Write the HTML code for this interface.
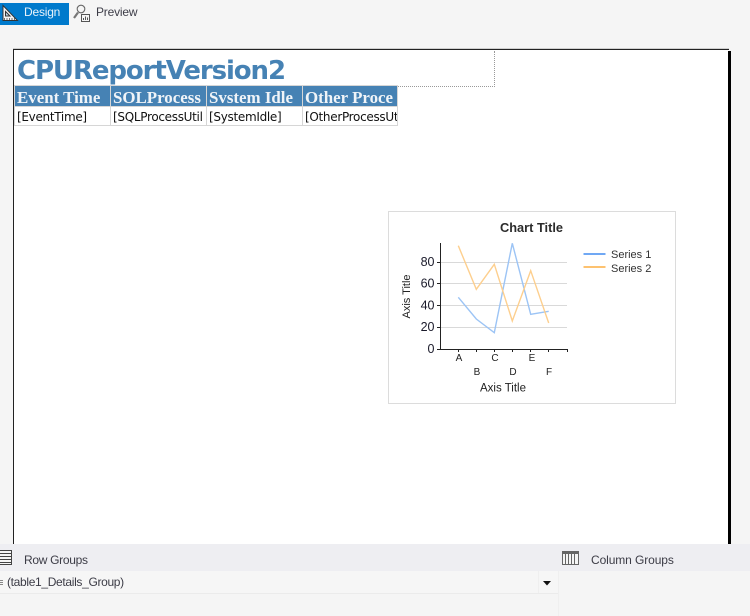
<!DOCTYPE html>
<html>
<head>
<meta charset="utf-8">
<style>
html,body{margin:0;padding:0;background:#f5f5f5;}
body{width:750px;height:616px;position:relative;overflow:hidden;font-family:"DejaVu Sans","Liberation Sans",sans-serif;}
.a{position:absolute;white-space:nowrap;}
.ui{font-family:"Liberation Sans",sans-serif;font-size:12px;color:#3c3c46;letter-spacing:-.2px;}
.th{position:absolute;top:86px;height:20px;background:#4682b4;color:#f0f4f8;font:bold 16.9px/23px "Liberation Serif",serif;padding-left:2px;overflow:hidden;white-space:nowrap;box-sizing:border-box;}
.td{position:absolute;top:107px;height:18px;background:#fff;color:#111;font:12px/21px "DejaVu Sans",sans-serif;padding-left:2px;overflow:hidden;white-space:nowrap;box-sizing:border-box;letter-spacing:-.3px;}
</style>
</head>
<body>
<!-- tabs -->
<div class="a" style="left:0;top:3px;width:69px;height:22px;background:#007acc;"></div>
<svg class="a" style="left:0;top:3px" width="20" height="20" viewBox="0 0 20 20">
<path d="M3 2.5V17.5H17.5L3 2.5Z" fill="#f4f4f4" stroke="#333" stroke-width="1"/>
<path d="M5.5 8.5V13H10Z" fill="#bcd7ec" stroke="#333" stroke-width="1"/>
<path d="M4 16H16" stroke="#444" stroke-width="1.6" stroke-dasharray="1 1.5"/>
</svg>
<div class="a ui" style="left:24px;top:5px;font-size:12px;line-height:15px;color:#e8f2fa;">Design</div>
<svg class="a" style="left:72px;top:3px" width="19" height="20" viewBox="0 0 19 20">
<circle cx="9" cy="6" r="3.8" fill="#f5f5f5" stroke="#666" stroke-width="1.1"/>
<path d="M6 9.5L2 15" stroke="#777" stroke-width="2.2"/>
<path d="M9.5 11.5H17.5V18.5H9.5Z" fill="#f5f5f5" stroke="#555"/>
<path d="M11.5 17V15M13.5 17V13.5M15.5 17V14.5" stroke="#555"/>
</svg>
<div class="a ui" style="left:96px;top:5px;line-height:15px;color:#3d3d48;">Preview</div>

<!-- report surface -->
<div class="a" style="left:13px;top:48px;width:716px;height:1px;background:#cfcfcf;"></div>
<div class="a" style="left:13px;top:49px;width:716px;height:495px;background:#fff;border-top:1px solid #222;border-left:1px solid #222;box-sizing:border-box;"></div>
<div class="a" style="left:728px;top:51px;width:3px;height:493px;background:#000;"></div>

<!-- title box -->
<div class="a" style="left:15px;top:51px;width:480px;height:36px;border-right:1px dotted #999;border-bottom:1px dotted #999;box-sizing:border-box;"></div>
<div class="a" style="left:17px;top:55px;font:bold 26px/33px 'DejaVu Sans',sans-serif;color:#4682b4;letter-spacing:-1.1px;">CPUReportVersion2</div>

<!-- table -->
<div class="a" style="left:14px;top:85px;width:384px;height:41px;background:#d6d6d6;"></div>
<div class="th" style="left:15px;width:95px;">Event Time</div>
<div class="th" style="left:111px;width:95px;">SOLProcess</div>
<div class="th" style="left:207px;width:95px;">Svstem Idle</div>
<div class="th" style="left:303px;width:94px;">Other Proce</div>
<div class="td" style="left:15px;width:95px;">[EventTime]</div>
<div class="td" style="left:111px;width:95px;">[SQLProcessUtil</div>
<div class="td" style="left:207px;width:95px;">[SystemIdle]</div>
<div class="td" style="left:303px;width:94px;">[OtherProcessUt</div>

<!-- chart -->
<svg class="a" style="left:388px;top:211px" width="288" height="193" viewBox="388 211 288 193" font-family="Liberation Sans, sans-serif">
<rect x="388.5" y="211.5" width="287" height="192" fill="#fff" stroke="#dcdcdc"/>
<text x="531.5" y="232" font-size="12.8" font-weight="bold" text-anchor="middle" fill="#2c2c2c">Chart Title</text>
<g stroke="#d9d9d9" stroke-width="1">
<path d="M440 262.5H567M440 283.5H567M440 305.5H567M440 327.5H567"/>
</g>
<path d="M440.5 243V349.5H567.5" fill="none" stroke="#222" stroke-width="1"/>
<path d="M437 262.5H440M437 283.5H440M437 305.5H440M437 327.5H440M437 349.5H440M458.5 349V352M476.5 349V352M494.5 349V352M512.5 349V352M530.5 349V352M548.5 349V352M567.5 349V352" stroke="#222" stroke-width="1"/>
<polyline points="458.3,297.3 476.3,319 494.3,332.7 512.3,243.3 530.7,314.3 548.7,311.3" fill="none" stroke="#9cc4f5" stroke-width="1.4"/>
<polyline points="458.3,245.7 476.3,289.3 494.3,264.3 512.3,321 530.7,270.7 548.7,323" fill="none" stroke="#fdcf8e" stroke-width="1.4"/>
<g font-size="12.5" fill="#1a1a2a" text-anchor="end">
<text x="434.5" y="266">80</text>
<text x="434.5" y="287.5">60</text>
<text x="434.5" y="309.5">40</text>
<text x="434.5" y="331">20</text>
<text x="434.5" y="353">0</text>
</g>
<g font-size="10" fill="#222" text-anchor="middle">
<text x="459" y="361">A</text>
<text x="477" y="375">B</text>
<text x="495" y="361">C</text>
<text x="513" y="375">D</text>
<text x="532" y="361">E</text>
<text x="549" y="375">F</text>
</g>
<text x="503" y="391.5" font-size="11.5" text-anchor="middle" fill="#222">Axis Title</text>
<text transform="translate(410 296.5) rotate(-90)" font-size="11" text-anchor="middle" fill="#222">Axis Title</text>
<path d="M583.5 254H605.5" stroke="#5b9cf2" stroke-width="1.8"/>
<path d="M583.5 267H605.5" stroke="#fdb95c" stroke-width="1.8"/>
<text x="611" y="258" font-size="11" fill="#333">Series 1</text>
<text x="611" y="272" font-size="11" fill="#333">Series 2</text>
</svg>

<!-- bottom panel -->
<div class="a" style="left:0;top:544px;width:750px;height:27px;background:#eeeef2;"></div>
<div class="a" style="left:0;top:571px;width:558px;height:22px;background:#f6f6f6;border-bottom:1px solid #ebebeb;"></div>
<div class="a" style="left:558px;top:571px;width:1px;height:45px;background:#efefef;"></div>
<svg class="a" style="left:0;top:550px" width="13" height="16" viewBox="0 0 13 16">
<path d="M-1 .5H11.5V14.5H-1Z" fill="#f5f5f5" stroke="#444"/>
<path d="M0 3.5H11M0 6.5H11M0 9.5H11M0 12.5H11" stroke="#444"/>
</svg>
<div class="a ui" style="left:24px;top:553px;line-height:15px;letter-spacing:-.3px;">Row Groups</div>
<svg class="a" style="left:562px;top:551px" width="18" height="15" viewBox="0 0 18 15">
<rect x="0.5" y="0.5" width="16" height="13" fill="#f5f5f5" stroke="#666"/>
<rect x="0" y="0" width="17" height="3" fill="#666"/>
<path d="M3.5 3V14M6.5 3V14M9.5 3V14M12.5 3V14" stroke="#666"/>
</svg>
<div class="a ui" style="left:591px;top:553px;line-height:15px;letter-spacing:-.1px;">Column Groups</div>
<svg class="a" style="left:0;top:579px" width="6" height="8" viewBox="0 0 6 8"><path d="M0 1.5H3M0 3.5H3M0 5.5H3" stroke="#888"/></svg>
<div class="a ui" style="left:7px;top:575px;line-height:15px;letter-spacing:-.33px;">(table1_Details_Group)</div>
<div class="a" style="left:538px;top:571px;width:1px;height:22px;background:#efefef;"></div>
<svg class="a" style="left:543px;top:581px" width="9" height="5" viewBox="0 0 9 5"><path d="M0 0H8L4 4.5Z" fill="#111"/></svg>
</body>
</html>
